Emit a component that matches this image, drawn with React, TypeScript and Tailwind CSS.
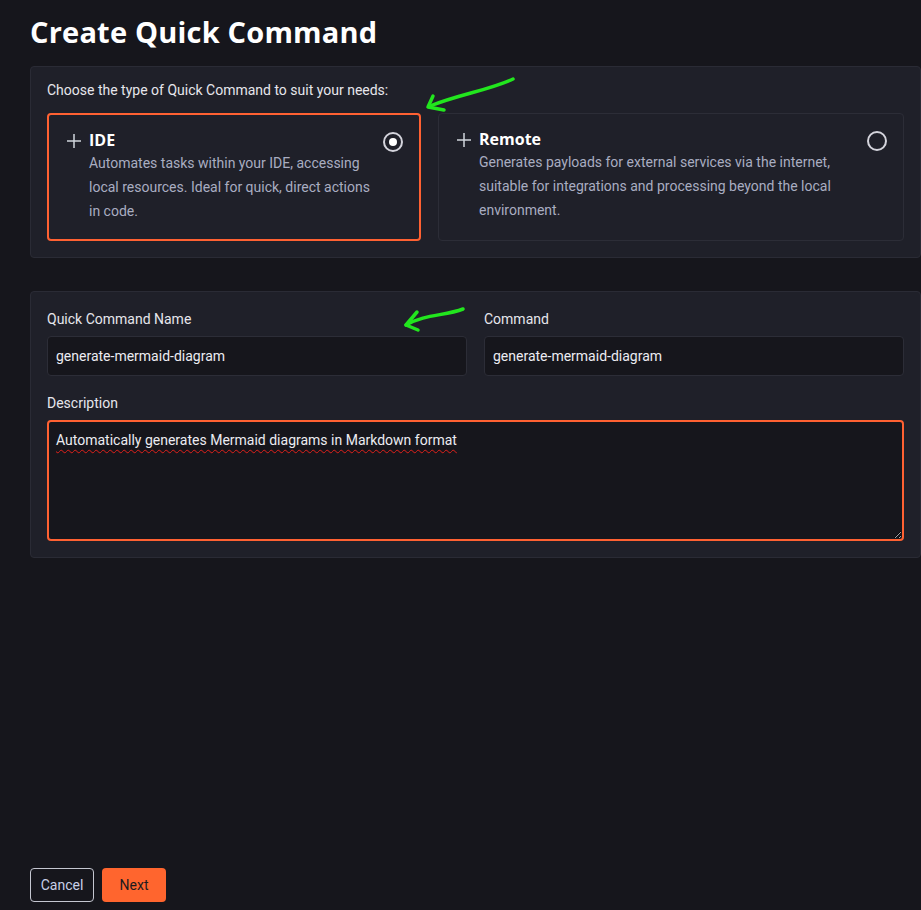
import { useState } from "react";

function PlusIcon() {
  return (
    <svg width="16" height="16" viewBox="0 0 16 16" className="shrink-0 text-gray-300">
      <path d="M8 1v14M1 8h14" stroke="currentColor" strokeWidth="1.5" />
    </svg>
  );
}

function Radio({ checked }: { checked: boolean }) {
  return (
    <span className="flex h-5 w-5 shrink-0 items-center justify-center rounded-full border-2 border-[#d4d4dc]">
      {checked && <span className="h-2 w-2 rounded-full bg-white"></span>}
    </span>
  );
}

const types = [
  {
    id: "ide",
    title: "IDE",
    text: "Automates tasks within your IDE, accessing local resources. Ideal for quick, direct actions in code.",
  },
  {
    id: "remote",
    title: "Remote",
    text: "Generates payloads for external services via the internet, suitable for integrations and processing beyond the local environment.",
  },
];

export default function App() {
  const [selected, setSelected] = useState("ide");

  return (
    <div className="relative flex min-h-[910px] flex-col bg-[#16161c] pl-[30px] font-['Roboto',sans-serif] text-[#e6e6ec]">
      <h1 className="mt-[13px] font-['Open_Sans',sans-serif] text-[29px] font-bold leading-[38px] tracking-[0.2px] text-white">
        Create Quick Command
      </h1>

      <div className="mt-[15px] rounded border border-[#2a2b35] bg-[#1f2029] px-4 pb-4 pt-[13px]">
        <p className="text-sm leading-5">Choose the type of Quick Command to suit your needs:</p>
        <div className="mt-[13px] grid grid-cols-[374px_1fr] gap-[17px]">
          {types.map((t) => {
            const active = selected === t.id;
            return (
              <div
                key={t.id}
                onClick={() => setSelected(t.id)}
                className={
                  active
                    ? "flex h-[128px] cursor-pointer items-start rounded border-2 border-[#ff6132] bg-[#1f2029] pl-[17px] pr-4 pt-[15px]"
                    : "flex h-[128px] cursor-pointer items-start rounded border border-[#2c2d37] bg-[#1f2029] pl-[17px] pr-[16px] pt-[15px]"
                }
              >
                <div className="mt-[3px]">
                  <PlusIcon />
                </div>
                <div className="ml-[7px] flex-1">
                  <div className="font-['Open_Sans',sans-serif] text-base font-bold leading-5 text-white">{t.title}</div>
                  <p className="mt-px text-sm leading-6 text-[#a9adc1]">{t.text}</p>
                </div>
                <div className="ml-[6px] mt-[2px]">
                  <Radio checked={active} />
                </div>
              </div>
            );
          })}
        </div>
      </div>

      <div className="mt-[33px] rounded border border-[#2a2b35] bg-[#1f2029] px-4 pb-4 pt-[17px]">
        <div className="grid grid-cols-2 gap-[17px]">
          <label className="flex flex-col">
            <span className="text-sm leading-5">Quick Command Name</span>
            <input
              defaultValue="generate-mermaid-diagram"
              className="mt-[7px] h-10 rounded border border-[#2c2d37] bg-[#16161c] px-2 text-sm text-[#ececf2] outline-none"
            />
          </label>
          <label className="flex flex-col">
            <span className="text-sm leading-5">Command</span>
            <input
              defaultValue="generate-mermaid-diagram"
              className="mt-[7px] h-10 rounded border border-[#2c2d37] bg-[#16161c] px-2 text-sm text-[#ececf2] outline-none"
            />
          </label>
        </div>
        <label className="mt-[17px] flex flex-col">
          <span className="text-sm leading-5">Description</span>
          <textarea
            defaultValue="Automatically generates Mermaid diagrams in Markdown format"
            className="mt-[7px] h-[121px] rounded border-2 border-[#ff6132] bg-[#16161c] px-[7px] py-2 text-sm leading-5 text-[#ececf2] underline decoration-[#e0201a] decoration-wavy decoration-1 underline-offset-4 outline-none"
          />
        </label>
      </div>

      <div className="mt-auto mb-[8px] flex gap-2">
        <button className="h-[34px] w-16 rounded border border-[#c4c6d0] text-sm text-[#c8d0e8]">Cancel</button>
        <button className="h-[34px] w-16 rounded bg-[#ff652e] text-sm text-[#1b1b1f]">Next</button>
      </div>

      <svg className="pointer-events-none absolute left-0 top-0" width="921" height="910">
        <g fill="none" stroke="#22e61e" strokeWidth="3.5" strokeLinecap="round" strokeLinejoin="round">
          <path d="M513 79 C 490 90, 460 94, 430 106" />
          <path d="M433 96 L428 107 L444 110" />
          <path d="M463 309 C 445 316, 425 314, 406 325" />
          <path d="M417 312 L406 325 L418 330" />
        </g>
      </svg>
    </div>
  );
}
